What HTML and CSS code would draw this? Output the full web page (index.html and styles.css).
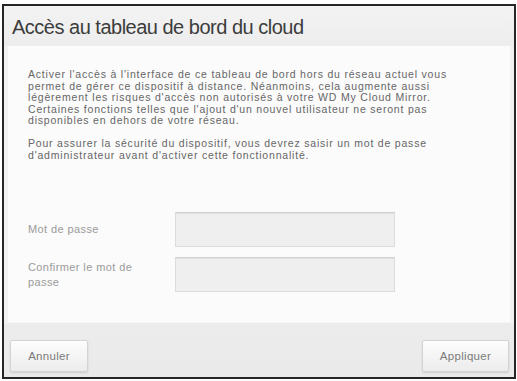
FILE: index.html
```html
<!DOCTYPE html>
<html lang="fr">
<head>
<meta charset="utf-8">
<link rel="stylesheet" href="styles.css">
</head>
<body>
<div class="frame">
  <div class="header">Accès au tableau de bord du cloud</div>
  <div class="content">
    <p class="text">Activer l'accès à l'interface de ce tableau de bord hors du réseau actuel vous<br>permet de gérer ce dispositif à distance. Néanmoins, cela augmente aussi<br>légèrement les risques d'accès non autorisés à votre WD My Cloud Mirror.<br>Certaines fonctions telles que l'ajout d'un nouvel utilisateur ne seront pas<br>disponibles en dehors de votre réseau.</p>
    <p class="text">Pour assurer la sécurité du dispositif, vous devrez saisir un mot de passe<br>d'administrateur avant d'activer cette fonctionnalité.</p>
    <div class="form">
      <div class="row">
        <label class="label">Mot de passe</label>
        <div class="input"></div>
      </div>
      <div class="row">
        <label class="label">Confirmer le mot de passe</label>
        <div class="input"></div>
      </div>
    </div>
  </div>
  <div class="footer">
    <button class="btn btn-cancel">Annuler</button>
    <button class="btn btn-apply">Appliquer</button>
  </div>
</div>
</body>
</html>
```
FILE: styles.css
```css
html, body {
  margin: 0;
  padding: 0;
  background: #ffffff;
}
body {
  font-family: "Liberation Sans", Arial, sans-serif;
}
.frame {
  box-sizing: border-box;
  margin: 4px 0 0 2px;
  width: 514px;
  height: 375px;
  border: 2px solid #262626;
  background: #f1f1f1;
  display: flex;
  flex-direction: column;
}
.header {
  height: 40px;
  padding-left: 8px;
  font-size: 20px;
  line-height: 42px;
  color: #3c3c3c;
  background: linear-gradient(#f3f3f3, #ededed);
  letter-spacing: -0.5px;
}
.content {
  flex: 1;
  margin: 0 4px;
  padding: 23px 20px 0 20px;
  background: #fbfbfb;
}
.text {
  margin: 0 0 11.5px 0;
  font-size: 10.5px;
  line-height: 11.5px;
  color: #666666;
  letter-spacing: 0.8px;
  white-space: nowrap;
}
.form {
  margin-top: 51px;
  display: flex;
  flex-direction: column;
  gap: 10px;
}
.row {
  display: flex;
  align-items: center;
}
.label {
  width: 118px;
  margin-right: 29px;
  font-size: 11px;
  line-height: 15px;
  color: #9a9a9a;
  letter-spacing: 0.4px;
}
.input {
  box-sizing: border-box;
  width: 220px;
  height: 35px;
  background: #efefef;
  border: 1px solid #dcdcdc;
  border-top-color: #cfcfcf;
  box-shadow: inset 0 1px 1px rgba(0,0,0,0.06);
}
.footer {
  height: 55px;
  box-sizing: border-box;
  padding: 17px 5px 0 6px;
  display: flex;
  justify-content: space-between;
  align-items: flex-start;
  background: linear-gradient(#ececec, #eaeaea);
  border-top: 1px solid #f5f5f5;
}
.btn {
  height: 32px;
  font-family: "Liberation Sans", Arial, sans-serif;
  font-size: 11.5px;
  color: #7a7a7a;
  letter-spacing: 0.3px;
  background: linear-gradient(#fdfdfd, #ececec);
  border: 1px solid #d4d4d4;
  border-radius: 2px;
  box-shadow: 0 1px 2px rgba(0,0,0,0.12);
  padding: 0;
}
.btn-cancel {
  width: 78px;
}
.btn-apply {
  width: 87px;
}
```
